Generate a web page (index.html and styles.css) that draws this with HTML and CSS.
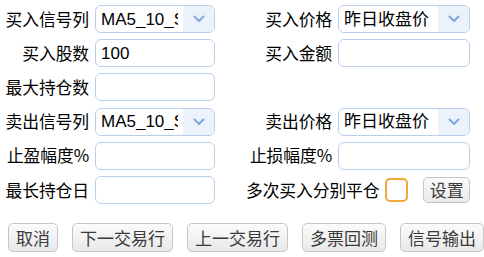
FILE: index.html
```html
<!DOCTYPE html>
<html lang="zh-CN">
<head>
<meta charset="utf-8">
<title>交易设置</title>
<link rel="stylesheet" href="styles.css">
</head>
<body>
<div class="panel">
  <div class="form">
    <label class="lbl">买入信号列</label>
    <div class="select"><span class="val">MA5_10_SIGNAL</span><span class="arrow"><svg width="12" height="8" viewBox="0 0 12 8"><path d="M1.5 1.5 L6 6 L10.5 1.5" fill="none" stroke="#7ea9de" stroke-width="2" stroke-linecap="round" stroke-linejoin="round"/></svg></span></div>
    <label class="lbl">买入价格</label>
    <div class="select"><span class="val">昨日收盘价</span><span class="arrow"><svg width="12" height="8" viewBox="0 0 12 8"><path d="M1.5 1.5 L6 6 L10.5 1.5" fill="none" stroke="#7ea9de" stroke-width="2" stroke-linecap="round" stroke-linejoin="round"/></svg></span></div>

    <label class="lbl">买入股数</label>
    <div class="input"><span class="val">100</span></div>
    <label class="lbl">买入金额</label>
    <div class="input"></div>

    <label class="lbl">最大持仓数</label>
    <div class="input"></div>
    <div class="empty"></div>
    <div class="empty"></div>

    <label class="lbl">卖出信号列</label>
    <div class="select"><span class="val">MA5_10_SIGNAL</span><span class="arrow"><svg width="12" height="8" viewBox="0 0 12 8"><path d="M1.5 1.5 L6 6 L10.5 1.5" fill="none" stroke="#7ea9de" stroke-width="2" stroke-linecap="round" stroke-linejoin="round"/></svg></span></div>
    <label class="lbl">卖出价格</label>
    <div class="select"><span class="val">昨日收盘价</span><span class="arrow"><svg width="12" height="8" viewBox="0 0 12 8"><path d="M1.5 1.5 L6 6 L10.5 1.5" fill="none" stroke="#7ea9de" stroke-width="2" stroke-linecap="round" stroke-linejoin="round"/></svg></span></div>

    <label class="lbl">止盈幅度%</label>
    <div class="input"></div>
    <label class="lbl">止损幅度%</label>
    <div class="input"></div>

    <label class="lbl">最长持仓日</label>
    <div class="input"></div>
    <div class="multi">
      <span class="lbl">多次买入分别平仓</span>
      <span class="check"></span>
      <button class="btn small">设置</button>
    </div>
  </div>
  <div class="actions">
    <button class="btn">取消</button>
    <button class="btn">下一交易行</button>
    <button class="btn">上一交易行</button>
    <button class="btn">多票回测</button>
    <button class="btn">信号输出</button>
  </div>
</div>
</body>
</html>
```

FILE: styles.css
```css
html, body {
  margin: 0;
  padding: 0;
  background: #ffffff;
}
body {
  width: 484px;
  height: 257px;
  overflow: hidden;
  font-family: "Noto Sans CJK SC", "Liberation Sans", sans-serif;
  color: #000;
}
.panel {
  padding: 5px 0 0 5px;
}
.form {
  display: grid;
  grid-template-columns: 84px 120px 111px 132px;
  grid-auto-rows: 28px;
  column-gap: 6px;
  row-gap: 6.2px;
}
.lbl {
  display: flex;
  align-items: center;
  justify-content: flex-end;
  font-size: 16.8px;
  white-space: nowrap;
  line-height: 1;
  letter-spacing: -0.1px;
}
.input, .select {
  box-sizing: border-box;
  border: 1.5px solid #b9cdee;
  border-radius: 6px;
  background: #fff;
  display: flex;
  align-items: center;
  overflow: hidden;
}
.val {
  font-family: "Liberation Sans", "Noto Sans CJK SC", sans-serif;
  font-size: 17px;
  padding-left: 5px;
  white-space: nowrap;
  overflow: hidden;
  flex: 1;
  min-width: 0;
  line-height: 1;
}
.select .val {
  margin-right: 5px;
}
.arrow {
  width: 31px;
  align-self: stretch;
  background: #ebf2fc;
  display: flex;
  align-items: center;
  justify-content: center;
  flex: none;
}
.multi {
  grid-column: 3 / span 2;
  display: flex;
  align-items: center;
  padding-left: 25px;
}
.check {
  box-sizing: border-box;
  width: 23px;
  height: 24px;
  margin-left: 6px;
  border: 2px solid #f2a83a;
  border-radius: 5px;
  background: #fff;
  flex: none;
}
.btn {
  box-sizing: border-box;
  height: 29px;
  padding: 0 7px;
  border: 1px solid #c6c6c6;
  border-radius: 5px;
  background: linear-gradient(#fbfbfb, #e9e9e9);
  font-family: "Noto Sans CJK SC", sans-serif;
  font-size: 17px;
  color: #3a3a3a;
  line-height: 1;
  cursor: pointer;
}
.btn.small {
  height: 26px;
  width: 50px;
  padding: 0;
  margin-left: 15px;
  font-size: 17px;
}
.actions {
  display: flex;
  gap: 14px;
  margin-top: 19px;
  padding-left: 3px;
}
```
